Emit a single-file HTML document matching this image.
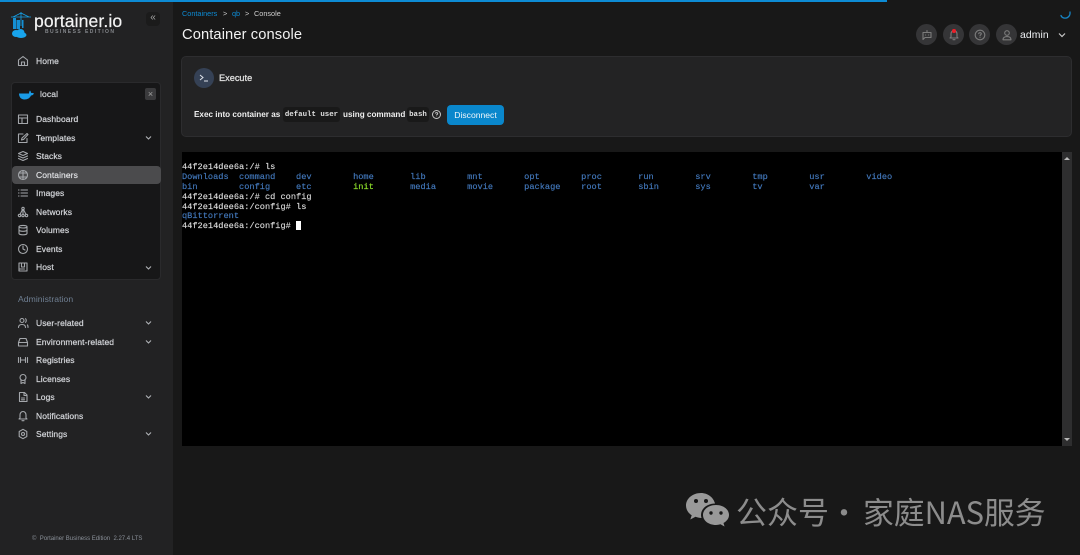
<!DOCTYPE html>
<html><head><meta charset="utf-8"><style>
html,body{margin:0;padding:0;background:#181818}
body{width:1080px;height:555px;overflow:hidden;position:relative;font-family:"Liberation Sans","Noto Sans CJK SC",sans-serif;color:#e8e8e8}
.a{position:absolute;white-space:nowrap}
.n{position:absolute;left:36px;font-size:8.5px;line-height:12px;color:#d2d4d8;font-weight:400;-webkit-text-stroke:.22px #d2d4d8;white-space:nowrap;letter-spacing:.08px}
.i{position:absolute;width:12px;height:12px;fill:none;stroke:#a4a7ab;stroke-width:1.1;stroke-linecap:round;stroke-linejoin:round}
.c{position:absolute;left:144px;width:9px;height:9px;fill:none;stroke:#b0b3b7;stroke-width:1.1}
.t{position:absolute;left:182px;font:8.64px/10px "Liberation Mono",monospace;letter-spacing:.008px;color:#d8d8d8;white-space:pre;font-weight:400;-webkit-text-stroke:.15px currentColor}
.t b{font-weight:400;color:#4379bd}
.t u{text-decoration:none;color:#8ee02a}
.r{position:absolute;width:21px;height:21px;border-radius:50%;background:#353537;top:24px}
.r svg{position:absolute;left:4.5px;top:4.5px;width:12px;height:12px;fill:none;stroke:#7c7c7c;stroke-width:1.1;stroke-linecap:round;stroke-linejoin:round}
.e{position:absolute;top:108px;font-size:8.15px;line-height:13px;font-weight:700;color:#f0f0f0;white-space:nowrap}
.k{position:absolute;top:107px;height:15px;background:#191919;border-radius:3px;color:#e0e0e0;text-align:center}
.k span{position:absolute;left:0;right:0;top:2px;font:7.4px/13px "Liberation Mono",monospace;font-weight:700}
.b{position:absolute;top:9px;font-size:7.3px;line-height:10px;white-space:nowrap;color:#d0d0d0}
</style></head><body>
<div class="a" style="left:0;top:0;width:173px;height:555px;background:#222223"></div>
<div class="a" style="left:0;top:0;width:887px;height:1.5px;background:#0d8bd4"></div>

<svg class="a" style="left:11px;top:12px;width:21px;height:27px" viewBox="0 0 21 27"><g stroke="#16a0e6" stroke-width=".8" fill="none"><path d="M0 5H20M10 0V14M10 1L2 5M10 1L18 5"/></g><g fill="#1590d4"><rect x="2" y="6" width="3" height="11"/><rect x="5.500" y="8" width="3.500" height="9"/><rect x="11" y="8" width="1.500" height="8"/></g><g fill="#18a4ec"><ellipse cx="5" cy="21.500" rx="4" ry="3.500"/><ellipse cx="9.500" cy="20.500" rx="4" ry="3.500"/><ellipse cx="10" cy="23" rx="5.500" ry="3"/></g></svg>
<div class="a" style="left:34px;top:10px;font-size:17.6px;line-height:22px;color:#f4f4f4;letter-spacing:.1px;-webkit-text-stroke:.2px #f4f4f4">portainer.io</div>
<div class="a" style="left:45px;top:29px;font-size:5px;line-height:7px;color:#85888c;letter-spacing:1.45px;font-weight:700">BUSINESS EDITION</div>
<div class="a" style="left:146px;top:12px;width:14px;height:14px;background:#1b1b1b;border-radius:4px;color:#a8a8a8;font-size:10px;line-height:12px;text-align:center">«</div>

<svg class="i" style="left:17px;top:55px" viewBox="0 0 12 12"><path d="M1.500 5L6 1.500 10.500 5V10.500H1.500ZM4.500 10.500V7H7.500V10.500"/></svg>
<div class="n" style="top:55px">Home</div>

<div class="a" style="left:11px;top:82px;width:150px;height:198px;background:#171718;border:1px solid #2a2a2c;border-radius:4px;box-sizing:border-box"></div>
<svg class="a" style="left:19px;top:89px;width:15px;height:11px" viewBox="0 0 15 11"><path d="M0 4.500H10C10 3 10.500 2 11 1.500 11.800 2.300 12 3.300 12 4 13 3.800 14 4 15 4.500 14 6 13 6.500 12 6.500 11 9 8.500 10.500 5.500 10.500 2 10.500 0 8 0 4.500Z" fill="#1a9be6"/></svg>
<div class="n" style="left:40px;top:88px;font-size:8.6px">local</div>
<div class="a" style="left:145px;top:88px;width:11px;height:12px;background:#3a3a3c;border-radius:2px;color:#a0a0a0;font-size:9px;line-height:12px;text-align:center">×</div>

<div class="a" style="left:12px;top:166px;width:149px;height:18px;background:#4b4b4d;border-radius:4px"></div>

<svg class="i" style="left:17px;top:113px" viewBox="0 0 12 12"><path d="M1.500 2H10.500V10.500H1.500ZM1.500 5H10.500M5 5V10.500"/></svg>
<div class="n" style="top:113px">Dashboard</div>
<svg class="i" style="left:17px;top:132px" viewBox="0 0 12 12"><path d="M10 6.500V10.500H1.500V2H6M4.500 8L5 6 10 1.500 11 2.500 6.500 7.500Z"/></svg>
<div class="n" style="top:132px">Templates</div>
<svg class="c" style="top:133px" viewBox="0 0 9 9"><path d="M2 3.500L4.500 6 7 3.500"/></svg>
<svg class="i" style="left:17px;top:150px" viewBox="0 0 12 12"><path d="M6 1.500L10.500 3.500 6 5.500 1.500 3.500ZM1.500 6L6 8 10.500 6M1.500 8.500L6 10.500 10.500 8.500"/></svg>
<div class="n" style="top:150px">Stacks</div>
<svg class="i" style="left:17px;top:169px" viewBox="0 0 12 12"><circle cx="6" cy="6" r="4.500"/><path d="M2 4H10M2 8H10M6 1.500V10.500"/></svg>
<div class="n" style="top:169px;color:#e8e8ea">Containers</div>
<svg class="i" style="left:17px;top:187px" viewBox="0 0 12 12"><path d="M4 3H10.500M4 6H10.500M4 9H10.500M1.500 3H2M1.500 6H2M1.500 9H2"/></svg>
<div class="n" style="top:187px">Images</div>
<svg class="i" style="left:17px;top:206px" viewBox="0 0 12 12"><circle cx="6" cy="2.500" r="1.200"/><circle cx="2.500" cy="9.500" r="1.200"/><circle cx="9.500" cy="9.500" r="1.200"/><circle cx="6" cy="9.500" r="1.200"/><path d="M5.500 3.500L3 8.500M6.500 3.500L9 8.500M6 3.500V8.500"/></svg>
<div class="n" style="top:206px">Networks</div>
<svg class="i" style="left:17px;top:224px" viewBox="0 0 12 12"><ellipse cx="6" cy="2.700" rx="4" ry="1.300"/><path d="M2 2.700V9.500C2 10.200 3.800 10.800 6 10.800S10 10.200 10 9.500V2.700M2 6C2 6.700 3.800 7.300 6 7.300S10 6.700 10 6"/></svg>
<div class="n" style="top:224px">Volumes</div>
<svg class="i" style="left:17px;top:243px" viewBox="0 0 12 12"><circle cx="6" cy="6" r="4.500"/><path d="M6 3V6L8 7"/></svg>
<div class="n" style="top:243px">Events</div>
<svg class="i" style="left:17px;top:261px" viewBox="0 0 12 12"><path d="M2 2H10V10H2ZM4.500 2V6H7.500V2M2 8H7.500"/></svg>
<div class="n" style="top:261px">Host</div>
<svg class="c" style="top:263px" viewBox="0 0 9 9"><path d="M2 3.500L4.500 6 7 3.500"/></svg>

<div class="a" style="left:18px;top:293px;font-size:8.6px;line-height:12px;color:#6f7f92;letter-spacing:.05px">Administration</div>

<svg class="i" style="left:17px;top:317px" viewBox="0 0 12 12"><circle cx="5" cy="3.500" r="2"/><path d="M1.500 10.500C1.500 8.500 3 7.500 5 7.500S8.500 8.500 8.500 10.500M8.500 1.700C9.500 2.300 9.500 4.700 8.500 5.300M10.500 8C11 8.700 11 9.500 11 10.500"/></svg>
<div class="n" style="top:317px">User-related</div>
<svg class="c" style="top:318px" viewBox="0 0 9 9"><path d="M2 3.500L4.500 6 7 3.500"/></svg>
<svg class="i" style="left:17px;top:336px" viewBox="0 0 12 12"><path d="M1.500 6.500H10.500V10H1.500ZM1.500 6.500L3 2.500H9L10.500 6.500"/></svg>
<div class="n" style="top:336px">Environment-related</div>
<svg class="c" style="top:337px" viewBox="0 0 9 9"><path d="M2 3.500L4.500 6 7 3.500"/></svg>
<svg class="i" style="left:17px;top:354px" viewBox="0 0 12 12"><path d="M1.500 3.500V8.500M3.500 3.500V8.500M8.500 3.500V8.500M10.500 3.500V8.500M3.500 6H8.500"/></svg>
<div class="n" style="top:354px">Registries</div>
<svg class="i" style="left:17px;top:373px" viewBox="0 0 12 12"><circle cx="6" cy="4.500" r="3"/><path d="M4 7V10.500L6 9.500 8 10.500V7"/></svg>
<div class="n" style="top:373px">Licenses</div>
<svg class="i" style="left:17px;top:391px" viewBox="0 0 12 12"><path d="M2.500 1.500H7.500L10 4V10.500H2.500ZM7 1.500V4.500H10M4.500 7H7.500M4.500 8.800H7.500"/></svg>
<div class="n" style="top:391px">Logs</div>
<svg class="c" style="top:392px" viewBox="0 0 9 9"><path d="M2 3.500L4.500 6 7 3.500"/></svg>
<svg class="i" style="left:17px;top:410px" viewBox="0 0 12 12"><path d="M3 8V5C3 3 4.300 1.500 6 1.500S9 3 9 5V8L10 9H2ZM5 10.700H7"/></svg>
<div class="n" style="top:410px">Notifications</div>
<svg class="i" style="left:17px;top:428px" viewBox="0 0 12 12"><circle cx="6" cy="6" r="1.500"/><path d="M6 1.300L9.800 3.500V8.500L6 10.700 2.200 8.500V3.500Z"/></svg>
<div class="n" style="top:428px">Settings</div>
<svg class="c" style="top:429px" viewBox="0 0 9 9"><path d="M2 3.500L4.500 6 7 3.500"/></svg>

<div class="a" style="left:32px;top:535px;font-size:6px;line-height:8px;color:#8a9098">© &nbsp;Portainer Business Edition &nbsp;2.27.4 LTS</div>

<div class="b" style="left:182px;color:#0d8bd4">Containers</div>
<div class="b" style="left:223px">&gt;</div>
<div class="b" style="left:232px;color:#0d8bd4">qb</div>
<div class="b" style="left:245px">&gt;</div>
<div class="b" style="left:254px">Console</div>
<div class="a" style="left:182px;top:26px;font-size:14.7px;line-height:18px;color:#f2f2f2;letter-spacing:.1px">Container console</div>

<svg class="a" style="left:1059px;top:9px;width:14px;height:12px" viewBox="0 0 14 12"><path d="M2 6.500C3 9.500 8 10.500 10.500 6.500 11 5.500 11.200 4.500 11 3" fill="none" stroke="#1686c8" stroke-width="1.300" stroke-linecap="round"/></svg>
<div class="r" style="left:916px"><svg viewBox="0 0 12 12"><path d="M2 3.500H10V8.500H4L2 10.500ZM6 1.500V3.500M4.500 6H4.600M7.500 6H7.600"/></svg></div>
<div class="r" style="left:943px"><svg viewBox="0 0 12 12"><path d="M3 8V5C3 3 4.300 1.500 6 1.500S9 3 9 5V8L10 9H2ZM5 10.700H7"/></svg><div class="a" style="left:9px;top:5px;width:3.500px;height:3.500px;border-radius:50%;background:#e8202a"></div></div>
<div class="r" style="left:969px"><svg viewBox="0 0 12 12"><circle cx="6" cy="6" r="4.800"/><path d="M4.700 4.700C4.900 3.300 7.300 3.300 7.300 4.800 7.300 5.800 6 5.900 6 6.900M6 8.600H6.050"/></svg></div>
<div class="r" style="left:996px"><svg viewBox="0 0 12 12"><circle cx="6" cy="4" r="2.300"/><path d="M2 10.800C2 8.500 3.800 7.600 6 7.600S10 8.500 10 10.800H2Z"/></svg></div>
<div class="a" style="left:1020px;top:29px;font-size:10.400px;line-height:13px;color:#eef0f4;letter-spacing:.1px">admin</div>
<svg class="a" style="left:1057px;top:30px;width:10px;height:10px;fill:none;stroke:#c8c8c8;stroke-width:1.200" viewBox="0 0 10 10"><path d="M2 3.500L5 6.500 8 3.500"/></svg>

<div class="a" style="left:181px;top:56px;width:891px;height:81px;background:#232324;border:1px solid #2d2d2f;border-radius:5px;box-sizing:border-box"></div>
<div class="a" style="left:194px;top:68px;width:20px;height:20px;border-radius:50%;background:#354155"></div>
<svg class="a" style="left:199px;top:73px;width:10px;height:10px;fill:none;stroke:#dfe3ea;stroke-width:1" viewBox="0 0 10 10"><path d="M1 2L4 4.500 1 7M5 8H9"/></svg>
<div class="a" style="left:219px;top:72px;font-size:9.200px;line-height:12px;color:#dedede;-webkit-text-stroke:.3px #dedede">Execute</div>
<div class="e" style="left:194px">Exec into container as</div>
<div class="k" style="left:283px;width:57px"><span>default user</span></div>
<div class="e" style="left:343px">using command</div>
<div class="k" style="left:407px;width:22px"><span>bash</span></div>
<svg class="a" style="left:431px;top:109px;width:11px;height:11px;fill:none;stroke:#c4c4c4;stroke-width:1" viewBox="0 0 11 11"><circle cx="5.500" cy="5.500" r="4"/><path d="M4.300 4.500C4.500 3.300 6.700 3.300 6.700 4.600 6.700 5.400 5.500 5.500 5.500 6.400M5.500 7.700V8"/></svg>
<div class="a" style="left:447px;top:105px;width:57px;height:20px;background:#0a87cc;border-radius:4px;color:#f0f6fa;font-size:8.600px;line-height:20px;text-align:center">Disconnect</div>

<div class="a" style="left:182px;top:152px;width:890px;height:294px;background:#000"></div>
<div class="a" style="left:1062px;top:152px;width:10px;height:294px;background:#2e2e2f"></div>
<div class="a" style="left:1064px;top:157px;border-left:3px solid transparent;border-right:3px solid transparent;border-bottom:3px solid #b8b8b8"></div>
<div class="a" style="left:1064px;top:438px;border-left:3px solid transparent;border-right:3px solid transparent;border-top:3px solid #b8b8b8"></div>

<div class="t" style="top:162px">44f2e14dee6a:/# ls</div>
<div class="t" style="top:172px"><b>Downloads  command    dev        home       lib        mnt        opt        proc       run        srv        tmp        usr        video</b></div>
<div class="t" style="top:182px"><b>bin        config     etc        </b><u>init</u><b>       media      movie      package    root       sbin       sys        tv         var</b></div>
<div class="t" style="top:192px">44f2e14dee6a:/# cd config</div>
<div class="t" style="top:202px">44f2e14dee6a:/config# ls</div>
<div class="t" style="top:211px"><b>qBittorrent</b></div>
<div class="t" style="top:221px">44f2e14dee6a:/config#</div>
<div class="a" style="left:296px;top:221px;width:5px;height:9px;background:#fff"></div>

<svg class="a" style="left:686px;top:493px;width:43px;height:35px" viewBox="0 0 43 35"><path d="M15 0C6.700 0 0 5.500 0 12.500 0 16.500 2.200 20 5.700 22.300L4.300 26.500 9.500 23.800C11.500 24.500 13.500 25 15.500 25 15.200 24 15 23 15 22 15 15 22 10.500 29 10.500 27.500 4.500 21.800 0 15 0Z" fill="#999"/><path d="M43 22C43 16.500 37.500 12 30 12S17 16.500 17 22 22.500 32 30 32C31.500 32 33 31.700 34.500 31.300L38.500 33.500 37.500 30C41 28 43 25.200 43 22Z" fill="#999"/><circle cx="10" cy="8" r="2" fill="#181818"/><circle cx="20" cy="8" r="2" fill="#181818"/><circle cx="25" cy="20" r="1.700" fill="#181818"/><circle cx="35" cy="20" r="1.700" fill="#181818"/></svg>
<div class="a" style="left:736px;top:493px;font-size:31px;line-height:36px;color:#8c8c8c;font-family:'Noto Sans CJK SC','Liberation Sans',sans-serif">公众号</div>
<div class="a" style="left:829px;top:493px;font-size:30px;line-height:36px;color:#8c8c8c;font-family:'Noto Sans CJK SC','Liberation Sans',sans-serif">·</div>
<div class="a" style="left:863px;top:493px;font-size:30.800px;line-height:36px;color:#8c8c8c;font-family:'Noto Sans CJK SC',sans-serif">家庭NAS服务</div>
</body></html>
